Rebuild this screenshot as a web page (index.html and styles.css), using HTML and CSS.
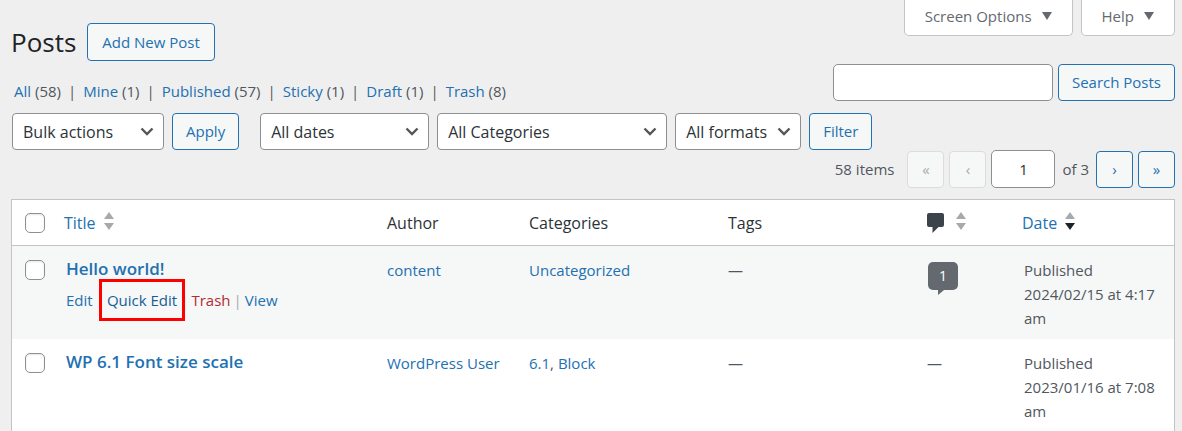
FILE: index.html
```html
<!DOCTYPE html>
<html lang="en">
<head>
<meta charset="utf-8">
<title>Posts</title>
<link rel="stylesheet" href="styles.css">
</head>
<body>
<main class="page">
  <header class="page-head">
    <div class="head-left">
      <div class="title-row">
        <h1 class="page-title">Posts</h1>
        <a class="button button-tall" href="#">Add New Post</a>
      </div>
      <ul class="views">
        <li><a href="#">All</a> (58)</li>
        <li><a href="#">Mine</a> (1)</li>
        <li><a href="#">Published</a> (57)</li>
        <li><a href="#">Sticky</a> (1)</li>
        <li><a href="#">Draft</a> (1)</li>
        <li><a href="#">Trash</a> (8)</li>
      </ul>
    </div>
    <div class="head-right">
      <div class="screen-tabs">
        <button class="screen-tab" type="button">Screen Options<span class="caret"></span></button>
        <button class="screen-tab" type="button">Help<span class="caret"></span></button>
      </div>
      <form class="search">
        <input class="search-input" type="search" aria-label="Search Posts">
        <button class="button" type="button">Search Posts</button>
      </form>
    </div>
  </header>

  <div class="filters">
    <div class="filter-group">
      <select class="select select-bulk" aria-label="Bulk actions"><option>Bulk actions</option></select>
      <button class="button" type="button">Apply</button>
    </div>
    <div class="filter-group">
      <select class="select select-dates" aria-label="Filter by date"><option>All dates</option></select>
      <select class="select select-cats" aria-label="Filter by category"><option>All Categories</option></select>
      <select class="select select-formats" aria-label="Filter by format"><option>All formats</option></select>
      <button class="button" type="button">Filter</button>
    </div>
  </div>

  <nav class="pagination" aria-label="Pagination">
    <span class="count">58 items</span>
    <button class="button page-button" type="button" disabled aria-label="First page">«</button>
    <button class="button page-button" type="button" disabled aria-label="Previous page">‹</button>
    <input class="page-input" type="text" value="1" aria-label="Current page">
    <span class="total">of 3</span>
    <button class="button page-button" type="button" aria-label="Next page">›</button>
    <button class="button page-button" type="button" aria-label="Last page">»</button>
  </nav>

  <table class="posts">
    <thead>
      <tr>
        <th class="col-check"><input class="check" type="checkbox" aria-label="Select all"></th>
        <th class="sortable"><a class="sort" href="#">Title<svg class="sorter" viewBox="0 0 10 18" aria-hidden="true"><path class="off" d="M5 0l5 7H0zM5 18l5-7H0z"/></svg></a></th>
        <th class="col-author">Author</th>
        <th class="col-cats">Categories</th>
        <th class="col-tags">Tags</th>
        <th class="col-comments"><a class="sort" href="#" aria-label="Comments"><svg class="comment-icon" viewBox="0 0 17 20" aria-hidden="true"><path d="M2 0h13q2 0 2 2v10q0 2-2 2h-3.500L5.500 20V14H2q-2 0-2-2V2q0-2 2-2z"/></svg><svg class="sorter" viewBox="0 0 10 18" aria-hidden="true"><path class="off" d="M5 0l5 7H0zM5 18l5-7H0z"/></svg></a></th>
        <th class="col-date sortable"><a class="sort" href="#">Date<svg class="sorter" viewBox="0 0 10 18" aria-hidden="true"><path class="off" d="M5 0l5 7H0z"/><path class="on" d="M5 18l5-7H0z"/></svg></a></th>
      </tr>
    </thead>
    <tbody>
      <tr class="hovered">
        <td class="col-check"><input class="check" type="checkbox" aria-label="Select Hello world!"></td>
        <td>
          <a class="row-title" href="#">Hello world!</a>
          <div class="row-actions">
            <a href="#">Edit</a><span class="sep">|</span><button class="quick-edit" type="button">Quick Edit</button><span class="sep">|</span><a class="danger" href="#">Trash</a><span class="sep">|</span><a href="#">View</a>
          </div>
        </td>
        <td><a href="#">content</a></td>
        <td><a href="#">Uncategorized</a></td>
        <td>—</td>
        <td><a class="bubble" href="#">1</a></td>
        <td class="date">Published<br>2024/02/15 at 4:17 am</td>
      </tr>
      <tr>
        <td class="col-check"><input class="check" type="checkbox" aria-label="Select WP 6.1 Font size scale"></td>
        <td><a class="row-title" href="#">WP 6.1 Font size scale</a></td>
        <td><a href="#">WordPress User</a></td>
        <td><a href="#">6.1</a>, <a href="#">Block</a></td>
        <td>—</td>
        <td>—</td>
        <td class="date">Published<br>2023/01/16 at 7:08 am</td>
      </tr>
    </tbody>
  </table>
</main>
</body>
</html>
```
FILE: styles.css
```css
* { box-sizing: border-box; }

body {
  margin: 0;
  background: #efefef;
  color: #50575e;
  font: 15px/24px "Open Sans", "Noto Sans", sans-serif;
}

button, input, select { font: inherit; margin: 0; }
a { color: #2271b1; text-decoration: none; }

.page { padding: 0 7px 0 11px; }

.page-head { display: flex; justify-content: space-between; }
.head-left { padding-top: 23px; }
.title-row { display: flex; align-items: center; gap: 11px; }
.page-title { margin: 0; color: #1d2327; font-size: 26px; line-height: 38px; font-weight: 400; }

.button {
  height: 37px;
  padding: 0 13px;
  border: 1px solid #2271b1;
  border-radius: 4px;
  background: #f6f7f7;
  color: #2271b1;
  line-height: 35px;
  white-space: nowrap;
}
.button-tall { height: 38px; padding: 0 14px; line-height: 36px; }

.views { display: flex; margin: 18px 0 0; padding: 0 0 0 3px; list-style: none; }
.views li + li::before { content: "|"; margin: 0 7px; }

.head-right { display: flex; flex-direction: column; align-items: flex-end; gap: 28px; }
.screen-tabs { display: flex; gap: 8px; }
.screen-tab {
  display: flex;
  align-items: center;
  gap: 10px;
  height: 36px;
  padding: 0 20px 4px;
  border: 1px solid #c3c4c7;
  border-top: 0;
  border-radius: 0 0 5px 5px;
  background: #fff;
  color: #646970;
}
.caret { border: 5px solid transparent; border-top: 8px solid #646970; border-bottom: 0; }

.search { display: flex; gap: 5px; }
.search-input {
  width: 220px;
  height: 37px;
  border: 1px solid #8c8f94;
  border-radius: 5px;
  background: #fff;
}

.filters { display: flex; gap: 21px; margin-top: 10px; padding-left: 1px; }
.filter-group { display: flex; gap: 8px; }
.select {
  height: 37px;
  padding: 0 30px 0 10px;
  border: 1px solid #8c8f94;
  border-radius: 4px;
  appearance: none;
  background: #fff url("data:image/svg+xml,%3Csvg xmlns='http://www.w3.org/2000/svg' width='14' height='9'%3E%3Cpath d='M1.500 1.500L7 7l5.500-5.500' fill='none' stroke='%23555' stroke-width='2.400'/%3E%3C/svg%3E") no-repeat right 9px center;
  color: #2c3338;
  font-size: 16px;
}
.select-bulk { width: 152px; }
.select-dates { width: 169px; }
.select-cats { width: 230px; }
.select-formats { width: 126px; }

.pagination { display: flex; justify-content: flex-end; align-items: center; gap: 5px; margin: 0 0 11px; }
.count { margin-right: 8px; }
.total { margin: 0 2px; }
.page-button { width: 37px; padding: 0; text-align: center; }
.page-button:disabled { border-color: #dcdcde; color: #a7aaad; }
.page-input {
  width: 64px;
  height: 38px;
  border: 1px solid #8c8f94;
  border-radius: 5px;
  background: #fff;
  color: #2c3338;
  text-align: center;
}

.posts {
  width: 100%;
  border: 1px solid #c3c4c7;
  border-collapse: separate;
  border-spacing: 0;
  table-layout: fixed;
  background: #fff;
}
.posts th {
  height: 46px;
  padding: 0 12px;
  border-bottom: 1px solid #c3c4c7;
  color: #2c3338;
  font-size: 16px;
  font-weight: 400;
  text-align: left;
}
.posts .sortable { padding-left: 10px; }
.posts td { height: 93px; padding: 12px 12px 9px; vertical-align: top; }
.posts td.date { padding-right: 8px; }
.posts .col-check { width: 42px; padding-left: 13px; padding-right: 0; }
.posts td.col-check { padding-top: 14px; }
.col-author { width: 142px; }
.col-cats { width: 199px; }
.col-tags { width: 199px; }
.col-comments { width: 97px; }
.col-date { width: 162px; }
.hovered { background: #f6f7f7; }

.sort { display: flex; align-items: center; gap: 8px; }
.sorter { width: 10px; height: 18px; margin-bottom: 4px; }
.off { fill: #a7aaad; }
.on { fill: #1d2327; }
.comment-icon { width: 17px; height: 20px; margin-right: 4px; fill: #3c434a; }

.check {
  display: block;
  width: 20px;
  height: 20px;
  border: 1px solid #8c8f94;
  border-radius: 5px;
  appearance: none;
  background: #fff;
  box-shadow: inset 0 1px 2px rgba(0, 0, 0, 0.1);
}

.row-title { display: block; font-size: 17px; line-height: 22px; font-weight: 600; }
.row-actions { display: flex; gap: 3px; margin-top: 8px; white-space: nowrap; }
.sep { color: #a7aaad; }
.danger { color: #b32d2e; }
.quick-edit { position: relative; padding: 0; border: 0; background: none; color: #135e96; }
.quick-edit::after {
  content: "";
  position: absolute;
  inset: -9px -8px;
  border: 3px solid #f00;
}

.bubble {
  position: relative;
  display: block;
  width: 30px;
  height: 28px;
  margin: 4px 0 0 1px;
  border-radius: 5px;
  background: #646970;
  color: #fff;
  font-size: 14px;
  line-height: 28px;
  text-align: center;
}
.bubble::after {
  content: "";
  position: absolute;
  left: 10px;
  top: 28px;
  border-top: 5px solid #646970;
  border-right: 6px solid transparent;
}
```
